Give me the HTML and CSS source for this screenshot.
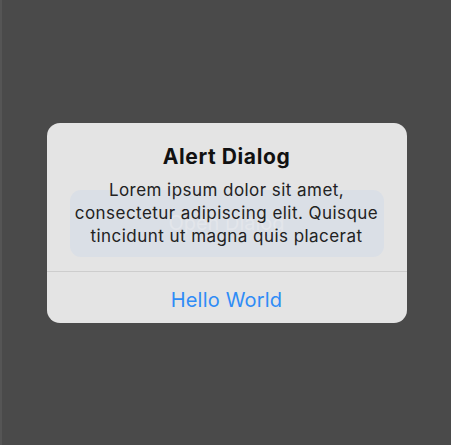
FILE: index.html
```html
<!DOCTYPE html>
<html>
<head>
<meta charset="utf-8">
<link rel="stylesheet" href="styles.css">
</head>
<body>
<div class="screen">
  <div class="dialog">
    <div class="ghost-button">Open Dialog</div>
    <div class="content">
      <div class="title">Alert Dialog</div>
      <div class="message">Lorem ipsum dolor sit amet, consectetur adipiscing elit. Quisque tincidunt ut magna quis placerat</div>
    </div>
    <div class="actions">
      <div class="action">Hello World</div>
    </div>
  </div>
</div>
</body>
</html>
```
FILE: styles.css
```css
html, body {
  margin: 0;
  padding: 0;
  height: 100%;
}
body {
  background: #4a4a4a;
  font-family: Inter, "Noto Sans", sans-serif;
}
.screen {
  height: 100%;
  display: flex;
  align-items: center;
  justify-content: center;
  border-left: 2px solid #555;
  box-sizing: border-box;
}
.dialog {
  position: relative;
  width: 360px;
  background: #e4e4e4;
  border-radius: 13px;
  display: flex;
  flex-direction: column;
  overflow: hidden;
}
.ghost-button {
  position: absolute;
  left: 23px;
  top: 67px;
  width: 314px;
  height: 67px;
  border-radius: 11px;
  background: #dadfe6;
  color: #e3e6eb;
  font-size: 20px;
  display: flex;
  align-items: center;
  justify-content: center;
}
.content {
  position: relative;
  padding: 20px 10px 23px;
  display: flex;
  flex-direction: column;
  align-items: center;
  gap: 9px;
}
.title {
  font-size: 21px;
  line-height: 27px;
  font-weight: 700;
  letter-spacing: 0.6px;
  color: #111;
}
.message {
  font-size: 17px;
  line-height: 23px;
  letter-spacing: 0.45px;
  color: #222;
  text-align: center;
  padding: 0 15px;
}
.actions {
  position: relative;
  border-top: 1px solid #cdcdcd;
  height: 52px;
  box-sizing: border-box;
  padding-top: 6px;
  display: flex;
  align-items: center;
  justify-content: center;
}
.action {
  font-size: 20px;
  letter-spacing: 0.2px;
  color: #2f8cf6;
}
```
